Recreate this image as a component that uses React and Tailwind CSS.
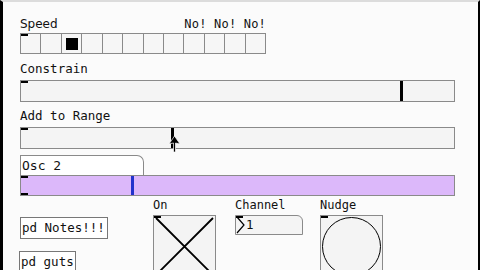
import React from 'react'

const mono = { fontFamily: '"DejaVu Sans Mono", monospace' }

const Inlet = () => <div className="absolute left-0 top-0 w-[7px] h-[2px] bg-black" />

const Slider = ({ knob, bg = 'bg-[#f4f4f4]', knobColor = 'bg-black', outlet, h = 'h-[22px]' }) => (
  <div className={`relative w-[435px] ${h} border border-[#8a8a8a] ${bg}`}>
    <Inlet />
    {outlet && <div className="absolute left-0 bottom-0 w-[7px] h-[2px] bg-black" />}
    <div className={`absolute top-0 bottom-0 w-[3px] ${knobColor}`} style={{ left: knob }} />
  </div>
)

const App = () => {
  const cells = Array.from({ length: 12 })

  return (
    <div
      className="w-[480px] h-[270px] overflow-hidden bg-[#fbfbfb] border-l-[3px] border-l-black border-r-2 border-r-black border-t-2 border-t-[#dcdcdc] text-[12px] text-[#111] pl-[17px]"
      style={mono}
    >
      <div className="w-[246px] flex justify-between items-end h-[29px] pb-[1px] leading-none" style={{ fontFamily: '"DejaVu Sans", sans-serif' }}>
        <span>Speed</span>
        <span style={mono} className="tracking-[0.2px]">No! No! No!</span>
      </div>
      <div className="mt-[2px] flex w-[246px] h-[21px] border border-[#8a8a8a] bg-[#f6f6f6] relative">
        <Inlet />
        {cells.map((_, i) => (
          <div key={i} className="flex-1 border-r border-[#8a8a8a] last:border-r-0 flex items-center justify-center">
            {i === 2 && <div className="w-[12px] h-[12px] bg-black" />}
          </div>
        ))}
      </div>

      <div className="h-[26px] flex items-end pb-[5px] leading-none text-[12.5px]">Constrain</div>
      <Slider knob={379} />

      <div className="h-[25px] flex items-end pb-[5px] leading-none text-[12.5px]">Add to Range</div>
      <div className="relative">
        <Slider knob={150} />
        <svg className="absolute left-[148px] top-[9px]" width="13" height="16" viewBox="0 0 13 16">
          <path d="M6.5 0 L12 8 L7.5 7 L7.5 16 L5.5 16 L5.5 7 L1 8 Z" fill="black" stroke="white" strokeWidth="0.7" />
        </svg>
      </div>

      <div className="mt-[6px] w-[124px] h-[20px] border border-[#8a8a8a] border-b-0 rounded-tr-[7px] bg-white flex items-center pl-[1px] leading-none text-[13px]">
        Osc 2
      </div>
      <Slider knob={110} bg="bg-[#dcb8fa]" knobColor="bg-[#2233cc]" outlet h="h-[21px]" />

      <div className="flex mt-[3px]">
        <div className="w-[133px] flex flex-col pt-[18px]">
          <div className="w-[88px] h-[22px] border border-[#777] bg-white flex items-center px-[1px] leading-none text-[12.5px]">pd Notes!!!</div>
          <div className="mt-[12px] -ml-[1px] w-[57px] h-[22px] border border-[#777] bg-white flex items-center px-[1px] leading-none text-[12.5px]">pd guts</div>
        </div>

        <div className="w-[82px] flex flex-col">
          <div className="h-[16px] leading-none">On</div>
          <div className="relative w-[63px] h-[63px] border border-[#8a8a8a] bg-[#f4f4f4]">
            <Inlet />
            <svg className="absolute inset-0" width="61" height="61" viewBox="0 0 61 61">
              <path d="M2 2 L59 59 M59 2 L2 59" stroke="black" strokeWidth="1.8" />
            </svg>
          </div>
        </div>

        <div className="w-[85px] flex flex-col">
          <div className="h-[16px] leading-none">Channel</div>
          <div className="relative w-[68px] h-[20px] border border-[#8a8a8a] rounded-tr-[6px] bg-[#f4f4f4] flex items-center">
            <Inlet />
            <svg width="10" height="18" viewBox="0 0 10 18" className="shrink-0">
              <path d="M1 1 L8 9 L1 17" fill="none" stroke="black" strokeWidth="1.2" />
            </svg>
            <span className="leading-none text-[12.5px]">1</span>
          </div>
        </div>

        <div className="flex flex-col">
          <div className="h-[16px] leading-none">Nudge</div>
          <div className="relative w-[63px] h-[63px] border border-[#8a8a8a] bg-[#f4f4f4] flex items-center justify-center">
            <Inlet />
            <div className="w-[59px] h-[59px] rounded-full border-[1.5px] border-black" />
          </div>
        </div>
      </div>
    </div>
  )
}

export default App
